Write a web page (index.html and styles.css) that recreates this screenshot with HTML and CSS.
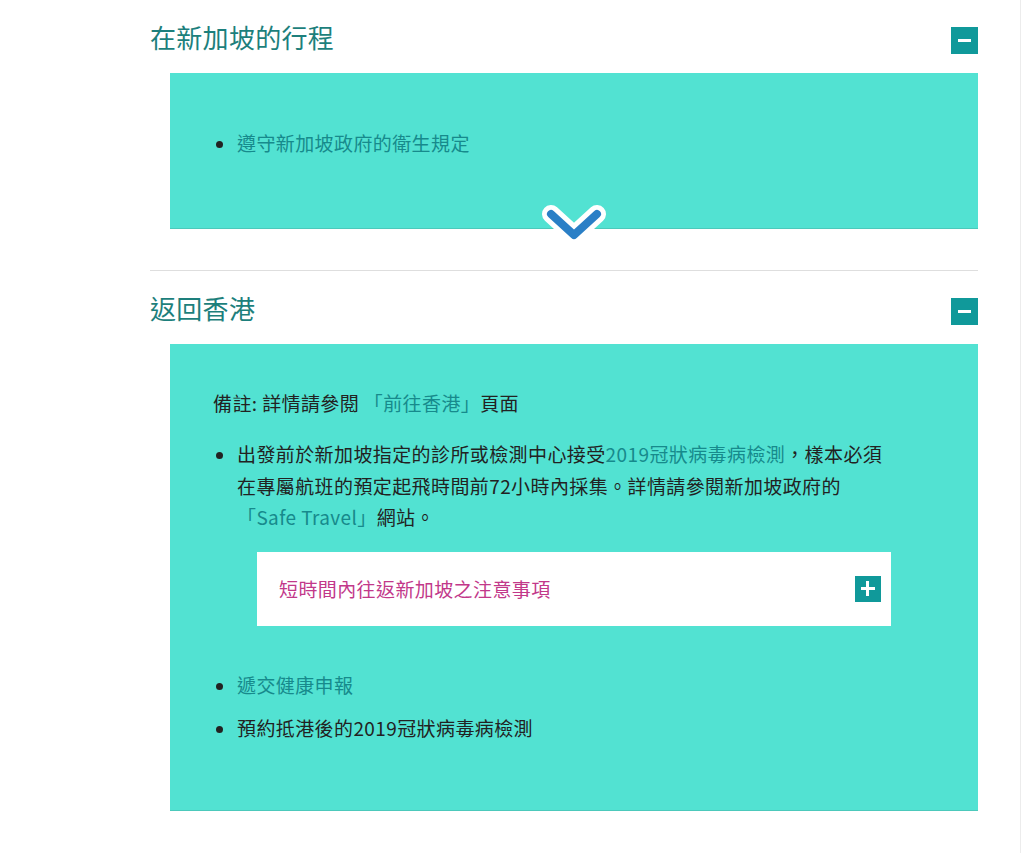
FILE: index.html
```html
<!DOCTYPE html>
<html lang="zh-Hant">
<head>
    <meta charset="UTF-8">
    <title>返回香港</title>
    <meta name="viewport" content="width=device-width, initial-scale=1.0">
    <link rel="stylesheet" href="styles.css">
</head>
<body>
    <div class="page">
        <div class="accordion">
            <section class="acc-item">
                <div class="acc-head">
                    <h2>在新加坡的行程</h2>
                    <button class="toggle" aria-label="收起"><span class="bar"></span></button>
                </div>
                <div class="acc-body short">
                    <ul class="list">
                        <li><a href="#">遵守新加坡政府的衛生規定</a></li>
                    </ul>
                    <svg class="more" width="70" height="44" viewBox="0 0 70 44">
                        <polyline points="12,12 35,33 58,12" fill="none" stroke="#fff" stroke-width="18" stroke-linecap="round" stroke-linejoin="round"/>
                        <polyline points="12,12 35,33 58,12" fill="none" stroke="#2a7fc6" stroke-width="8" stroke-linecap="round" stroke-linejoin="round"/>
                    </svg>
                </div>
            </section>

            <section class="acc-item">
                <div class="acc-head">
                    <h2>返回香港</h2>
                    <button class="toggle" aria-label="收起"><span class="bar"></span></button>
                </div>
                <div class="acc-body">
                    <p class="note">備註: 詳情請參閱 <a href="#">「前往香港」</a>頁面</p>
                    <ul class="list">
                        <li>
                            出發前於新加坡指定的診所或檢測中心接受<a href="#">2019冠狀病毒病檢測</a>，樣本必須在專屬航班的預定起飛時間前72小時內採集。詳情請參閱新加坡政府的<a href="#">「Safe Travel」</a>網站。
                            <div class="sub-card">
                                <span class="sub-title">短時間內往返新加坡之注意事項</span>
                                <button class="toggle small" aria-label="展開"><span class="bar"></span><span class="bar vert"></span></button>
                            </div>
                        </li>
                        <li><a href="#">遞交健康申報</a></li>
                        <li>預約抵港後的2019冠狀病毒病檢測</li>
                    </ul>
                </div>
            </section>
        </div>
    </div>
</body>
</html>
```

FILE: styles.css
```css
/* Base */
body {
    margin: 0;
    font-family: "Noto Sans CJK TC", "Noto Sans", sans-serif;
    color: #222;
    background: #fff;
}

.page {
    width: 1020px;
    min-height: 853px;
    border-right: 1px solid #ececec;
}

.accordion {
    margin-left: 150px;
    width: 828px;
}

a {
    color: #178a8c;
    text-decoration: none;
}

/* Accordion item */
.acc-item + .acc-item {
    border-top: 1px solid #dedede;
    margin-top: 42px;
}

.acc-head {
    display: flex;
    justify-content: space-between;
    align-items: flex-start;
    padding-top: 20px;
    margin-bottom: 19px;
}

.acc-head h2 {
    margin: 0;
    font-size: 26px;
    line-height: 34px;
    font-weight: 400;
    letter-spacing: 0.3px;
    color: #1d7f7c;
}

.toggle {
    position: relative;
    width: 27px;
    height: 27px;
    margin-top: 7px;
    padding: 0;
    border: none;
    background: #10999a;
    cursor: pointer;
}

.toggle .bar {
    position: absolute;
    left: 7px;
    top: 12px;
    width: 13px;
    height: 3px;
    background: #fff;
}

.toggle.small {
    width: 26px;
    height: 26px;
    margin-top: 0;
}

.toggle.small .bar {
    left: 6px;
    top: 11px;
    width: 14px;
    height: 3px;
}

.toggle.small .bar.vert {
    left: 11px;
    top: 5px;
    width: 3px;
    height: 15px;
}

/* Body panel */
.acc-body {
    position: relative;
    margin-left: 20px;
    padding: 43px 87px 67px 43px;
    background: #52e2d2;
    box-shadow: 0 1px 0 #4cc9bb;
    font-size: 19px;
    line-height: 31.5px;
    letter-spacing: 0.4px;
}

.acc-body.short {
    padding-top: 54px;
    padding-bottom: 69px;
}

.note {
    margin: 0 0 20px;
}

.list {
    margin: 0;
    padding-left: 24px;
}

.list li + li {
    margin-top: 11.5px;
}

.more {
    position: absolute;
    left: 50%;
    bottom: -18px;
    transform: translateX(-50%);
}

/* Nested card */
.sub-card {
    display: flex;
    justify-content: space-between;
    align-items: center;
    height: 74px;
    margin: 19px 0 43px 20px;
    padding: 0 10px 0 22px;
    background: #fff;
}

.sub-title {
    color: #c2388a;
}
```
